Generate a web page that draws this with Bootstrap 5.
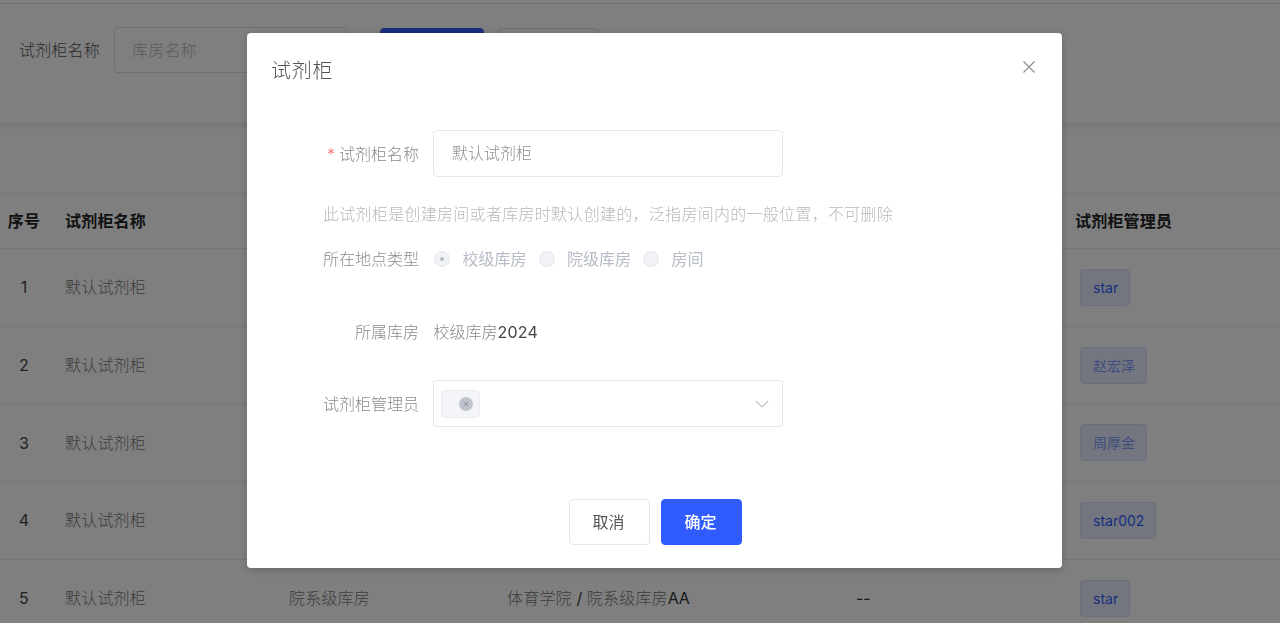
<!DOCTYPE html>
<html lang="zh-CN">
<head>
<meta charset="utf-8">
<title>试剂柜</title>
<link href="https://cdn.jsdelivr.net/npm/bootstrap@5.3.0/dist/css/bootstrap.min.css" rel="stylesheet">
<style>
html,body{height:623px;overflow:hidden}
body{font-family:Inter,"Noto Sans CJK SC","Noto Sans",sans-serif;font-size:16px;color:#333;background:#fff;font-weight:300}
.top-rule{height:3px;border-bottom:1px solid #e8e8e8;box-sizing:content-box}
.filter-bar{height:119px;padding:23px 19px 0;box-shadow:0 2px 6px rgba(0,0,0,.1);gap:14px;align-items:flex-start}
.filter-label{line-height:46px;color:#555;letter-spacing:.2px}
.filter-input{width:233px;height:46px;border:1px solid #d9dce6;border-radius:4px;padding:0 17px;line-height:44px;color:#b5b5b5;letter-spacing:.2px}
.filter-btns{margin-left:19px;gap:14px;padding-top:1px}
.f-btn{width:104px;height:46px;border-radius:4px;background:#2f5bff;border:1px solid #2f5bff}
.f-btn-alt{width:101px;background:#fff;border:1px solid #d9dce6}
.list-wrap{margin-top:70px}
.data-table{table-layout:fixed;width:1280px;margin:0;--bs-table-bg:transparent}
.data-table th,.data-table td{padding:0 8px;vertical-align:middle;border-bottom:1px solid #ededed;color:#7a7a7a;font-weight:300;letter-spacing:.2px}
.data-table thead th{height:55px;color:#222;font-weight:700;font-size:16px;border-top:1px solid #ededed}
.data-table tbody td{height:77.7px}
.data-table td.idx{text-align:center;color:#444;padding:0 9px 0 0;font-weight:400}
.data-table th.idx{padding:0 9px 0 0;text-align:center}
.latin{color:#333;font-weight:400;letter-spacing:-.2px}
.user-tag{display:inline-block;margin-left:5px;padding:0 11px 0 12px;height:37px;line-height:35px;border-radius:4px;background:#e8edff;border:1px solid #d4deff;color:#2f5bff;font-size:14px;font-weight:400;letter-spacing:0;vertical-align:middle}
.user-tag-cjk{color:#7f9bff}
.dim-layer{--bs-backdrop-opacity:.5;--bs-backdrop-bg:#000}
.dialog-box{position:fixed;left:247px;top:33px;width:815px;height:535px;background:#fff;border-radius:4px;box-shadow:0 2px 8px rgba(0,0,0,.2);z-index:1060;color:#888}
.dialog-head{height:73px;padding:20px 24px 0 25px}
.dialog-title{font-size:20px;line-height:34px;font-weight:300;color:#555;margin:1px 0 0 -1px;letter-spacing:.7px}
.dialog-close{width:14px;height:14px;padding:0;border:0;background:none;line-height:0;margin:7px 2px 0 0}
.form-row-x{display:flex;align-items:center}
.f-label{width:186px;padding-right:14px;text-align:right;flex:none;color:#8a8a8a;white-space:nowrap}
.req{color:#f56c6c;margin-right:4px}
.f-ctrl{width:350px;height:47px;border:1px solid #e4e6ef;border-radius:4px;flex:none}
.name-val{padding:0 18px;line-height:45px;color:#8f8f8f}
.hint{margin:25px 0 0 76px;line-height:24px;color:#b8b8b8;letter-spacing:.29px;white-space:nowrap}
.radio-row{margin-top:21px;height:24px}
.radio-opt{display:flex;align-items:center;margin-right:11px;color:#b8bcc8;font-weight:400}
.radio-dot{width:16px;height:16px;border-radius:50%;background:#f1f2f6;border:1px solid #e4e6ef;margin:0 12.5px 0 1px;display:flex;align-items:center;justify-content:center}
.radio-dot i{width:4px;height:4px;border-radius:50%;background:#b8bcc8;display:block}
.store-row{margin-top:49px;height:24px}
.store-val{color:#888;margin-left:.5px}
.store-val b{font-weight:400;color:#444;letter-spacing:.2px}
.owner-row{margin-top:36px}
.owner-ctrl{position:relative;display:flex;align-items:center;justify-content:space-between;padding:0 13px 0 7px}
.owner-tag{width:39px;height:28px;background:#f4f5f8;border:1px solid #ebedf3;border-radius:4px;display:flex;align-items:center;justify-content:flex-end;padding-right:6px}
.owner-x{width:14px;height:14px;line-height:0}
.dialog-foot{margin-top:72px;gap:11px;padding-left:322px}
.foot-btn{width:81px;height:46px;border-radius:4px;font-size:16px;padding:0 2px 0 0}
.foot-cancel{background:#fff;border:1px solid #e4e6ef;color:#555;font-weight:400}
.foot-ok{background:#2f5bff;border:1px solid #2f5bff;color:#fff;font-weight:500}
</style>
</head>
<body>
<div class="top-rule"></div>
<div class="filter-bar d-flex">
  <span class="filter-label">试剂柜名称</span>
  <div class="filter-input">库房名称</div>
  <div class="filter-btns d-flex"><div class="f-btn"></div><div class="f-btn f-btn-alt"></div></div>
</div>
<div class="list-wrap">
<table class="table data-table">
<colgroup><col style="width:57px"><col style="width:224px"><col style="width:218px"><col style="width:349px"><col style="width:219px"><col style="width:213px"></colgroup>
<thead><tr><th class="idx">序号</th><th>试剂柜名称</th><th></th><th></th><th></th><th>试剂柜管理员</th></tr></thead>
<tbody>
<tr><td class="idx">1</td><td>默认试剂柜</td><td></td><td></td><td></td><td><span class="user-tag">star</span></td></tr>
<tr><td class="idx">2</td><td>默认试剂柜</td><td></td><td></td><td></td><td><span class="user-tag user-tag-cjk">赵宏泽</span></td></tr>
<tr><td class="idx">3</td><td>默认试剂柜</td><td></td><td></td><td></td><td><span class="user-tag user-tag-cjk">周厚金</span></td></tr>
<tr><td class="idx">4</td><td>默认试剂柜</td><td></td><td></td><td></td><td><span class="user-tag">star002</span></td></tr>
<tr><td class="idx">5</td><td>默认试剂柜</td><td>院系级库房</td><td>体育学院 <span class="latin">/</span> 院系级库房<span class="latin">AA</span></td><td><span class="latin">--</span></td><td><span class="user-tag">star</span></td></tr>
</tbody>
</table>
</div>

<div class="modal-backdrop show dim-layer"></div>
<div class="dialog-box" role="dialog" aria-label="试剂柜">
  <div class="dialog-head d-flex justify-content-between align-items-start">
    <h5 class="dialog-title">试剂柜</h5>
    <button class="dialog-close" aria-label="关闭"><svg width="14" height="14" viewBox="0 0 14 14" fill="none" stroke="#8c8c8c" stroke-width="1.1"><path d="M1.5 1.5l11 11M12.5 1.5l-11 11"/></svg></button>
  </div>
  <div class="dialog-main" style="padding-top:24px">
    <div class="form-row-x"><div class="f-label"><span class="req">*</span>试剂柜名称</div><div class="f-ctrl name-val">默认试剂柜</div></div>
    <div class="hint">此试剂柜是创建房间或者库房时默认创建的，泛指房间内的一般位置，不可删除</div>
    <div class="form-row-x radio-row"><div class="f-label">所在地点类型</div>
      <div class="radio-opt"><span class="radio-dot"><i></i></span>校级库房</div>
      <div class="radio-opt"><span class="radio-dot"></span>院级库房</div>
      <div class="radio-opt"><span class="radio-dot"></span>房间</div>
    </div>
    <div class="form-row-x store-row"><div class="f-label">所属库房</div><div class="store-val">校级库房<b>2024</b></div></div>
    <div class="form-row-x owner-row"><div class="f-label">试剂柜管理员</div>
      <div class="f-ctrl owner-ctrl">
        <div class="owner-tag"><span class="owner-x"><svg width="14" height="14" viewBox="0 0 14 14"><circle cx="7" cy="7" r="7" fill="#c0c3cc"/><path d="M4.5 4.5l5 5M9.5 4.5l-5 5" stroke="#8c8f98" stroke-width="1" fill="none"/></svg></span></div>
        <svg width="14" height="8" viewBox="0 0 14 8" fill="none" stroke="#c0c3cc" stroke-width="1.1"><path d="M1 1l6 6 6-6"/></svg>
      </div>
    </div>
    <div class="dialog-foot d-flex">
      <button class="foot-btn foot-cancel">取消</button>
      <button class="foot-btn foot-ok">确定</button>
    </div>
  </div>
</div>
<script src="https://cdn.jsdelivr.net/npm/bootstrap@5.3.0/dist/js/bootstrap.bundle.min.js"></script>
</body>
</html>
